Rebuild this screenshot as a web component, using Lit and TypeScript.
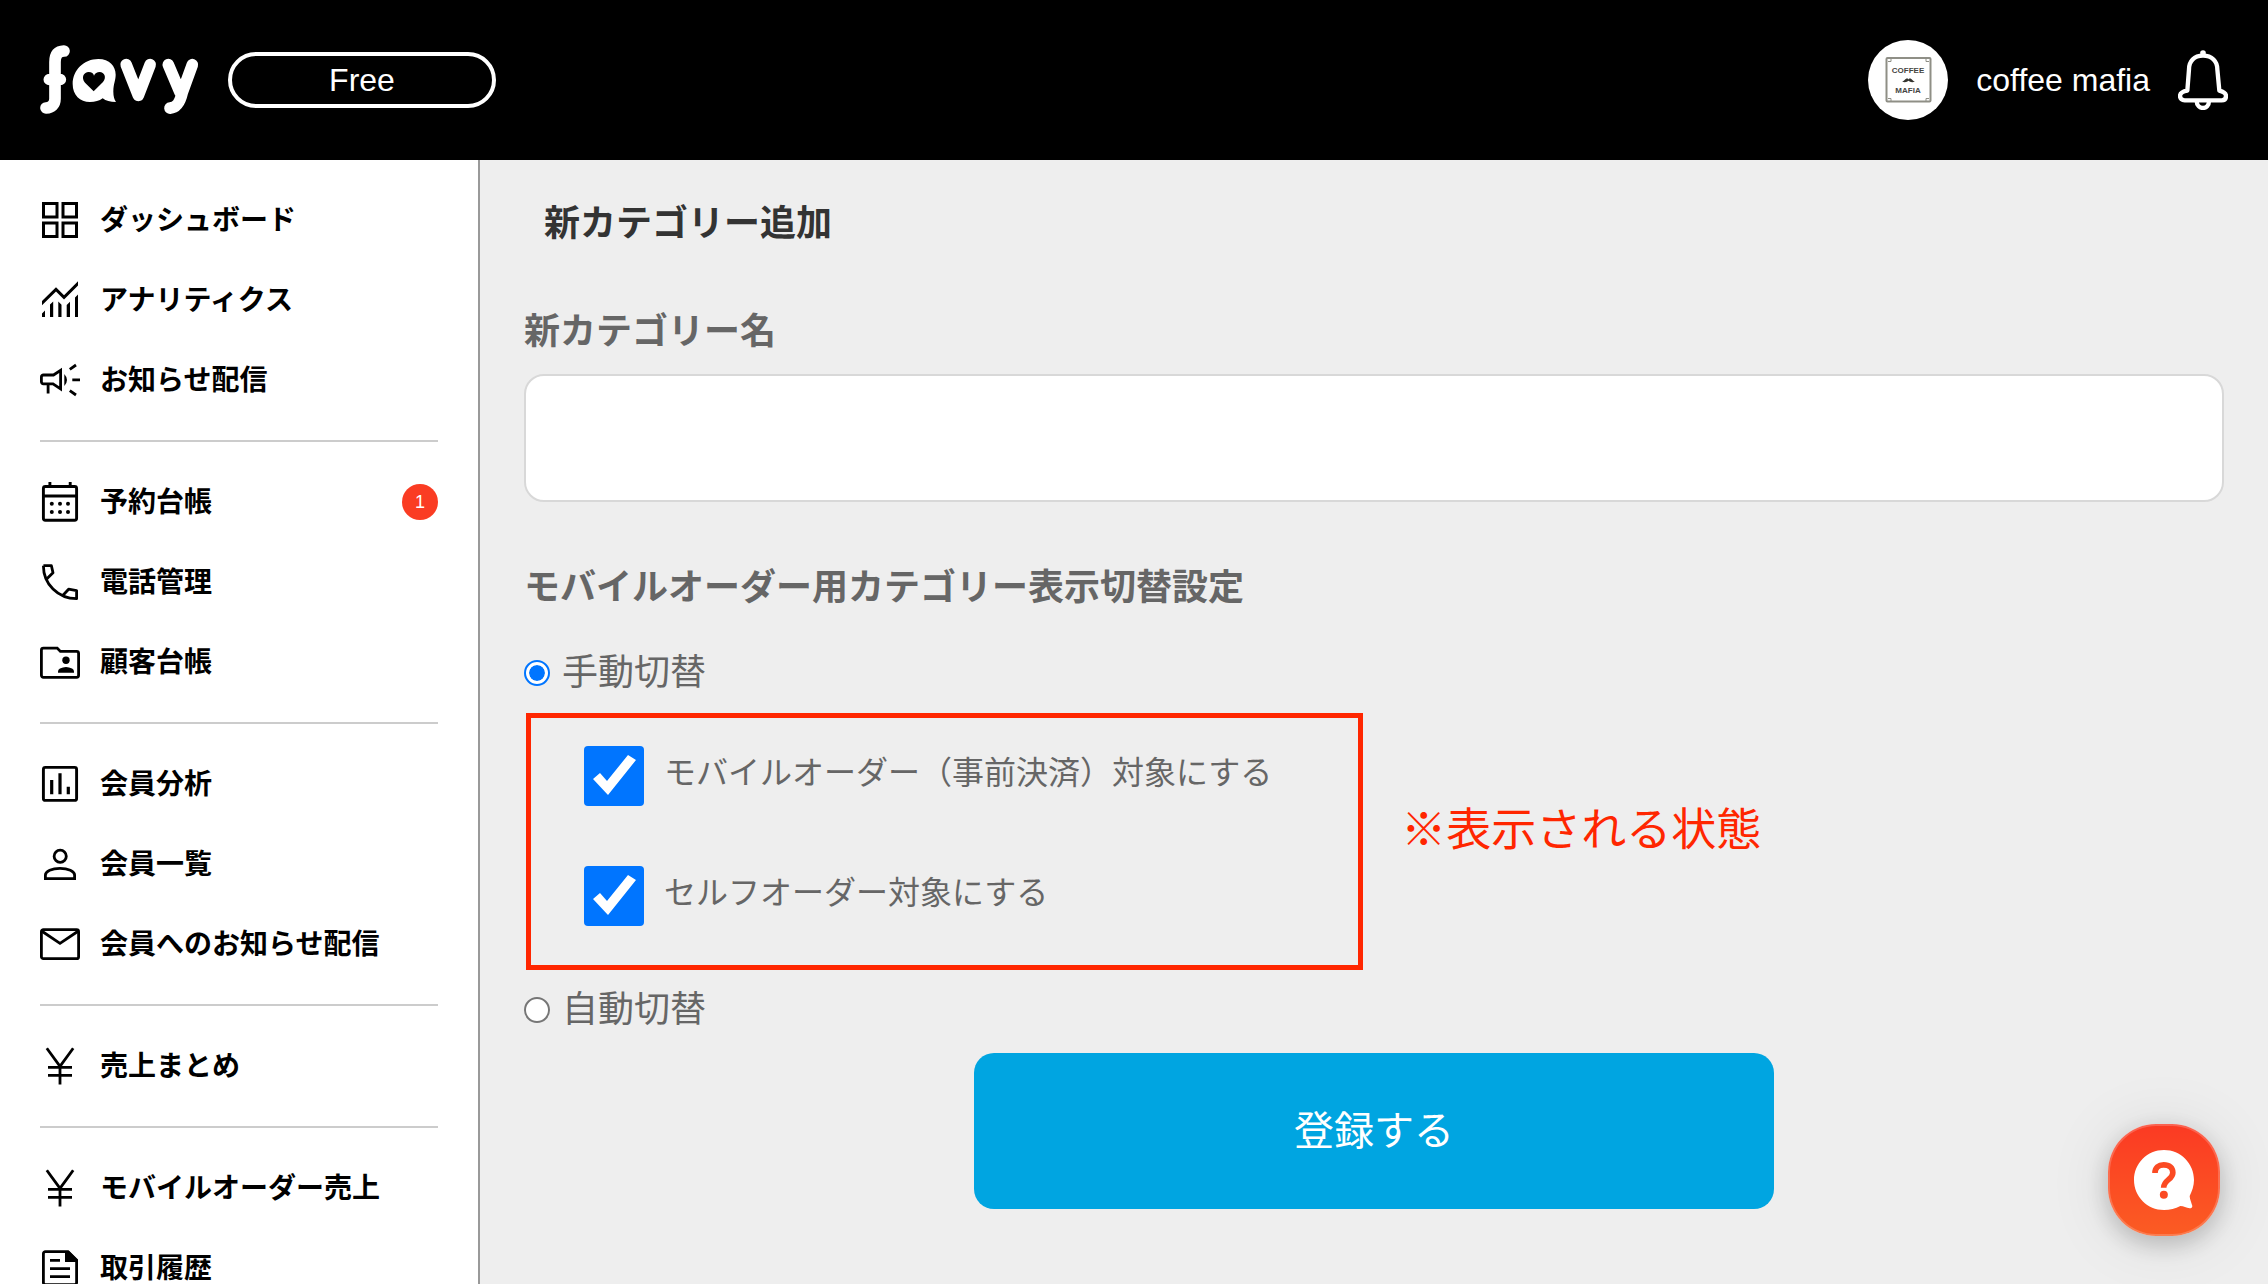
import { LitElement, html, svg, css, nothing } from "lit";
import type { SVGTemplateResult } from "lit";
import { customElement, property, state } from "lit/decorators.js";

const icons: Record<string, SVGTemplateResult> = {
  dashboard: svg`<g fill="none" stroke="currentColor" stroke-width="3">
    <rect x="3.5" y="3.5" width="13.5" height="13.5" /><rect x="23" y="3.5" width="13.5" height="13.5" />
    <rect x="3.5" y="23" width="13.5" height="13.5" /><rect x="23" y="23" width="13.5" height="13.5" /></g>`,
  analytics: svg`<g fill="currentColor">
    <path d="M2 21 16 7.2 24 15.2 38 1.3V5.5L24 19.4 16 11.4 2 25.2z" />
    <path d="M2 33.5 5 30.5V37H2zM10 24.6 13.2 21.4V37H10zM18.3 21.6 21.5 24.8V37H18.3zM26.7 25 30 21.8V37H26.7zM35 17.4 38 14.4V37H35z" /></g>`,
  megaphone: svg`<g fill="none" stroke="currentColor" stroke-width="2.8">
    <path d="M1.4 17a2 2 0 0 1 2-2H13.5L20.6 10.4V28.8L13 23.8H3.4a2 2 0 0 1-2-2zM8.1 24V33.6" />
    <path d="M29.8 9.3 36 5M32.3 19.9H40M29.8 30.6 36 35" /></g>
    <path d="M24.3 14Q27 17 27 20T24.3 26z" fill="currentColor" />`,
  calendar: svg`<g fill="none" stroke="currentColor" stroke-width="2.9">
    <rect x="3.4" y="4.5" width="33.2" height="33.8" rx="2" />
    <path d="M9.9 0V4M30.2 0V4M3 14H37" /></g>
    <g fill="currentColor"><circle cx="11.8" cy="21.8" r="2" /><circle cx="20" cy="21.8" r="2" /><circle cx="28" cy="21.8" r="2" />
    <circle cx="11.8" cy="30" r="2" /><circle cx="20" cy="30" r="2" /><circle cx="28" cy="30" r="2" /></g>`,
  phone: svg`<g fill="none" stroke="currentColor" stroke-width="2.8" stroke-linejoin="round">
    <path d="M3.4 3.7C3.4 22 18 36.7 36.6 36.7V28.6L28.6 27.2 23 33.2M3.4 3.7H11.4L13 10.8 6.9 16.8" /></g>`,
  folder: svg`<path d="M1.4 8A2 2 0 0 1 3.4 6.1H17.2L20.4 9.4H36.6a2 2 0 0 1 2 2V33.3a2 2 0 0 1-2 2H3.4a2 2 0 0 1-2-2z" fill="none" stroke="currentColor" stroke-width="2.8" />
    <g fill="currentColor"><circle cx="26" cy="18.3" r="3.7" /><path d="M18 30.7V29.4Q18 27.4 20 26.4 26 23.4 32 26.4 34 27.4 34 29.4V30.7z" /></g>`,
  chart: svg`<g fill="none" stroke="currentColor" stroke-width="2.9">
    <rect x="3.4" y="3.4" width="33.2" height="33" rx="2" /><path d="M11.7 16V30.3M20 9.3V30.3M28.3 22.7V30.3" stroke-width="3.2" /></g>`,
  person: svg`<g fill="none" stroke="currentColor" stroke-width="2.8">
    <circle cx="20.2" cy="12.3" r="6.1" /><path d="M5.4 34.6V31C5.4 27 12 24.4 20 24.4S34.6 27 34.6 31V34.6z" /></g>`,
  mail: svg`<g fill="none" stroke="currentColor" stroke-width="2.8">
    <rect x="1.4" y="5.7" width="37.2" height="29" rx="2" /><path d="M1.6 7 20 19.3 38.4 7" /></g>`,
  yen: svg`<path d="M6.8 2.3 20 20.4 33.2 2.3M20 20V38.4M8 21.4H32M8 29.4H32" fill="none" stroke="currentColor" stroke-width="2.8" />`,
  document: svg`<path d="M28 3.7H5.4a2 2 0 0 0-2 2V34.6a2 2 0 0 0 2 2H34.6a2 2 0 0 0 2-2V12z" fill="none" stroke="currentColor" stroke-width="2.8" />
    <path d="M25 3V14H38V12L29 3z" fill="currentColor" /><path d="M10 12.4H20M10 20.7H30M10 28.7H30" stroke="currentColor" stroke-width="2.8" />`,
};

interface MenuItem {
  icon: string;
  label: string;
  badge?: number;
}

const menu: MenuItem[][] = [
  [
    { icon: "dashboard", label: "ダッシュボード" },
    { icon: "analytics", label: "アナリティクス" },
    { icon: "megaphone", label: "お知らせ配信" },
  ],
  [
    { icon: "calendar", label: "予約台帳", badge: 1 },
    { icon: "phone", label: "電話管理" },
    { icon: "folder", label: "顧客台帳" },
  ],
  [
    { icon: "chart", label: "会員分析" },
    { icon: "person", label: "会員一覧" },
    { icon: "mail", label: "会員へのお知らせ配信" },
  ],
  [{ icon: "yen", label: "売上まとめ" }],
  [
    { icon: "yen", label: "モバイルオーダー売上" },
    { icon: "document", label: "取引履歴" },
  ],
];

@customElement("site-header")
export class SiteHeader extends LitElement {
  @property() plan = "";
  @property() account = "";

  static styles = css`
    :host {
      display: flex;
      align-items: center;
      justify-content: space-between;
      box-sizing: border-box;
      height: 160px;
      padding: 0 40px;
      background: #000;
      color: #fff;
      font-size: 32px;
      line-height: 48px;
    }
    .side {
      display: flex;
      align-items: center;
      gap: 28px;
    }
    .brand {
      display: flex;
    }
    .plan {
      box-sizing: border-box;
      width: 268px;
      border: 4px solid #fff;
      border-radius: 28px;
      text-align: center;
    }
    .bell {
      display: flex;
      padding: 0;
      border: 0;
      background: none;
      color: inherit;
    }
    .avatar-text {
      font: bold 8px "Liberation Sans", sans-serif;
      fill: #45453f;
      text-anchor: middle;
    }
  `;

  render() {
    return html`
      <div class="side">
        <a class="brand" href="#" aria-label="favy">
          <svg width="160" height="72" viewBox="120 132 480 216" fill="none" stroke="#fff" stroke-width="35" stroke-linecap="round" stroke-linejoin="round">
            <path d="M192 153C173 154 165 165 165 186V296C165 313 155 323 138 324M148 238.500H181" />
            <path d="M378.500 194 415 286 450.500 194M505 194 540 277M577 194 547 277C540 309 530 323 510 324.500" />
            <path stroke="none" fill="#fff" d="M295 177C329 177 347 199 347 224C347 242 340 250 340 275 340 290 343 298 348 306 330 306 318 303 308 295 298 303 285 306 270 306 240 306 218 285 218 252 218 210 252 177 295 177z" />
            <path stroke="none" fill="#000" d="M281 274 255 248C242 232 252 216 266 216 275 216 281 221 282 227 285 220 291 216 299 216 313 216 321 232 309 246z" />
          </svg>
        </a>
        <div class="plan">${this.plan}</div>
      </div>
      <div class="side">
        <svg width="80" height="80" viewBox="0 0 80 80" role="img" aria-label="${this.account}">
          <circle cx="40" cy="40" r="40" fill="#fff" />
          <g fill="none" stroke="#8f8f86">
            <rect x="18.500" y="18" width="44" height="43.500" rx="1" stroke-width="2" />
            <path d="M20 21.500h3v-3M61 21.500h-3v-3M20 58.500h3v3M61 58.500h-3v3" stroke-width="1" />
          </g>
          <text class="avatar-text" x="40" y="33">COFFEE</text>
          <path d="M34 41.500C37 41 37 38.500 39 38.500 40 38.500 40.300 39 40.500 39.500 40.700 39 41 38.500 42 38.500 44 38.500 44 41 47 41.500 44 43 42 42 40.500 40.800 39 42 37 43 34 41.500z" fill="#33332e" />
          <text class="avatar-text" x="40" y="53">MAFIA</text>
        </svg>
        <span>${this.account}</span>
        <button class="bell" type="button" aria-label="通知">
          <svg width="50" height="60" viewBox="1014 150 150 180" fill="none" stroke="currentColor" stroke-width="13" stroke-linejoin="round">
            <path d="M1089 167C1062 167 1047 184 1047 208L1042 272C1030 274 1020 279 1020 288 1020 296 1026 301 1034 301H1145C1153 301 1158 296 1158 288 1158 279 1149 275 1138 272L1132 208C1132 184 1116 167 1089 167z" />
            <path d="M1070 303C1070 317 1080 324 1089 324S1107 317 1107 303" />
            <circle cx="1089" cy="159" r="8.500" fill="currentColor" stroke="none" />
          </svg>
        </button>
      </div>
    `;
  }
}

@customElement("side-menu")
export class SideMenu extends LitElement {
  static styles = css`
    :host {
      display: block;
      box-sizing: border-box;
      padding: 20px 40px;
      overflow-y: auto;
      scrollbar-width: none;
      border-right: 2px solid #999;
      background: #fff;
      color: #000;
    }
    .group {
      margin: 0;
      padding: 0;
      list-style: none;
    }
    .group + .group {
      margin-top: 20px;
      padding-top: 20px;
      border-top: 2px solid #ccc;
    }
    .item {
      display: flex;
      align-items: center;
      gap: 20px;
      height: 80px;
      color: inherit;
      font-size: 28px;
      font-weight: 700;
      line-height: 40px;
      text-decoration: none;
      white-space: nowrap;
    }
    .icon {
      flex: none;
      width: 40px;
      height: 40px;
    }
    .label {
      flex: 1;
      padding-top: 2px;
    }
    .badge {
      width: 36px;
      border-radius: 50%;
      background: #fa3c23;
      color: #fff;
      font-size: 18px;
      font-weight: 400;
      line-height: 36px;
      text-align: center;
    }
  `;

  render() {
    return html`<nav aria-label="メニュー">
      ${menu.map(
        (group) => html`<ul class="group">
          ${group.map(
            (item) => html`<li>
              <a class="item" href="#">
                <svg class="icon" viewBox="0 0 40 40" aria-hidden="true">${icons[item.icon]}</svg>
                <span class="label">${item.label}</span>
                ${item.badge ? html`<span class="badge">${item.badge}</span>` : nothing}
              </a>
            </li>`,
          )}
        </ul>`,
      )}
    </nav>`;
  }
}

@customElement("category-form")
export class CategoryForm extends LitElement {
  @state() private mode = "manual";

  static styles = css`
    :host {
      display: block;
      box-sizing: border-box;
      min-width: 0;
      padding: 42px 44px;
      overflow-y: auto;
      background: #eee;
      color: #666;
      font-size: 36px;
      line-height: 44px;
    }
    .title {
      margin: 0 20px 64px;
      color: #333;
      font-size: 36px;
      font-weight: 700;
    }
    .form {
      display: flex;
      flex-direction: column;
    }
    .heading {
      padding: 0;
      font-weight: 700;
    }
    .name {
      box-sizing: border-box;
      width: 100%;
      height: 128px;
      margin: 20px 0 64px;
      padding: 0 32px;
      border: 2px solid #d8d8d8;
      border-radius: 20px;
      background: #fff;
      color: #333;
      font: inherit;
    }
    .modes {
      margin: 0;
      padding: 0;
      border: 0;
      min-width: 0;
    }
    .mode {
      display: flex;
      align-items: center;
      gap: 12px;
      width: fit-content;
    }
    .heading + .mode {
      margin-top: 41px;
    }
    .radio {
      appearance: none;
      box-sizing: border-box;
      width: 26px;
      height: 26px;
      margin: 0;
      border: 2px solid #767676;
      border-radius: 50%;
      background: #fff;
    }
    .radio:checked {
      padding: 3px;
      border-color: #0075ff;
      background: #0075ff content-box;
      box-shadow: inset 0 0 0 3px #fff;
    }
    .manual {
      display: flex;
      align-items: center;
      gap: 38px;
      margin: 18px 2px;
    }
    .targets {
      display: flex;
      flex-direction: column;
      gap: 60px;
      padding: 28px 86px 39px 53px;
      border: 5px solid #ff2600;
    }
    .target {
      display: flex;
      gap: 20px;
      font-size: 32px;
      line-height: 54px;
      white-space: nowrap;
    }
    .check {
      appearance: none;
      flex: none;
      width: 60px;
      height: 60px;
      margin: 0;
      border-radius: 4px;
      background: #fff;
      box-shadow: inset 0 0 0 2px #767676;
    }
    .check:checked {
      background: #0075ff;
      box-shadow: none;
    }
    .check:checked::before {
      content: "";
      display: block;
      height: 60px;
      background: #fff;
      clip-path: polygon(44px 9px, 52px 14px, 24px 49px, 9px 33px, 16px 27px, 23px 35px);
    }
    .note {
      margin: 0;
      padding-bottom: 22px;
      color: #ff2600;
      font-size: 45px;
      line-height: 60px;
    }
    .submit {
      align-self: center;
      width: 800px;
      max-width: 100%;
      height: 156px;
      margin-top: 21px;
      border: 0;
      border-radius: 20px;
      background: #00a5e1;
      color: #fff;
      font: inherit;
      font-size: 40px;
    }
  `;

  private pick(event: Event) {
    this.mode = (event.target as HTMLInputElement).value;
  }

  render() {
    return html`
      <h1 class="title">新カテゴリー追加</h1>
      <form class="form" @submit=${(event: Event) => event.preventDefault()}>
        <label class="heading" for="name">新カテゴリー名</label>
        <input class="name" id="name" type="text" />
        <fieldset class="modes">
          <legend class="heading">モバイルオーダー用カテゴリー表示切替設定</legend>
          <label class="mode">
            <input class="radio" type="radio" name="mode" value="manual" .checked=${this.mode === "manual"} @change=${this.pick} />
            手動切替
          </label>
          <div class="manual">
            <div class="targets">
              <label class="target"><input class="check" type="checkbox" checked />モバイルオーダー（事前決済）対象にする</label>
              <label class="target"><input class="check" type="checkbox" checked />セルフオーダー対象にする</label>
            </div>
            <p class="note">※表示される状態</p>
          </div>
          <label class="mode">
            <input class="radio" type="radio" name="mode" value="auto" .checked=${this.mode === "auto"} @change=${this.pick} />
            自動切替
          </label>
        </fieldset>
        <button class="submit" type="submit">登録する</button>
      </form>
    `;
  }
}

@customElement("app-root")
export class AppRoot extends LitElement {
  static styles = css`
    :host {
      display: grid;
      grid-template-rows: auto minmax(0, 1fr);
      height: 100vh;
      font-family: "Liberation Sans", "Noto Sans CJK JP", sans-serif;
    }
    .body {
      display: grid;
      grid-template-columns: 480px minmax(0, 1fr);
      min-height: 0;
    }
    .help {
      position: fixed;
      right: 48px;
      bottom: 48px;
      display: grid;
      place-items: center;
      width: 112px;
      height: 112px;
      padding: 0;
      border: 2px solid rgba(255, 255, 255, 0.2);
      border-radius: 48px;
      background: linear-gradient(#fb3a23, #fb5c23) border-box;
      box-shadow: 0 8px 24px rgba(0, 0, 0, 0.2), 0 4px 64px rgba(0, 0, 0, 0.1);
    }
  `;

  render() {
    return html`
      <site-header plan="Free" account="coffee mafia"></site-header>
      <div class="body">
        <side-menu></side-menu>
        <category-form></category-form>
      </div>
      <button class="help" type="button" aria-label="ヘルプ">
        <svg width="60" height="60" viewBox="222 198 180 180" aria-hidden="true">
          <path fill="#fff" d="M312 198C362 198 402 238 402 288 402 306 396 322 389 336 389 346 395 357 397 366 397 371 394 373 389 373 379 372 371 366 361 366 346 374 330 378 312 378 262 378 222 338 222 288S262 198 312 198z" />
          <path fill="none" stroke="#fb4a23" stroke-width="17" d="M285 267C285 251 296 242.500 311 242.500 328 242.500 338.500 252 338.500 266 338.500 287 311 287 311 311" />
          <circle cx="311.500" cy="332" r="12" fill="#fb4a23" />
        </svg>
      </button>
    `;
  }
}
